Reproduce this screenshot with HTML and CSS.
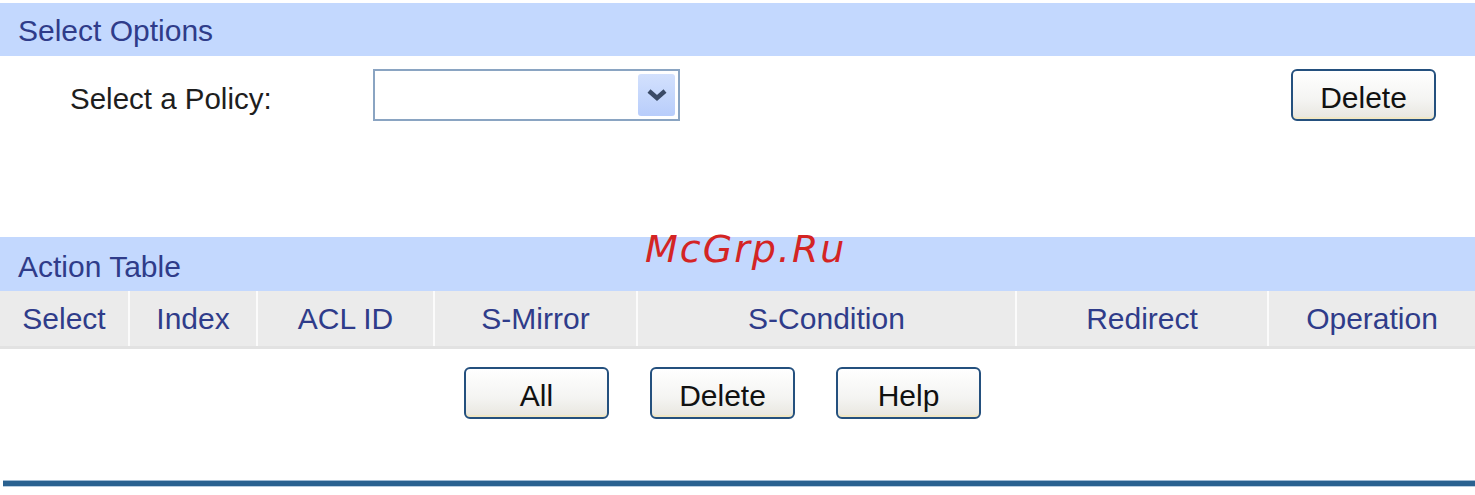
FILE: index.html
```html
<!DOCTYPE html>
<html lang="en">
<head>
  <meta charset="UTF-8" />
  <title>Action Table</title>
  <link rel="stylesheet" href="styles.css">
</head>
<body>
  <div class="page">
    <!-- Select Options -->
    <div class="band">Select Options</div>
    <div class="options">
      <div class="policy">
        <span class="policy-label">Select a Policy:</span>
        <div class="select-box">
          <div class="select-arrow">
            <svg width="22" height="14" viewBox="0 0 22 14"><path d="M3 3 L11 10 L19 3" fill="none" stroke="#3a4a66" stroke-width="4.5" stroke-linejoin="miter"/></svg>
          </div>
        </div>
      </div>
      <button class="btn">Delete</button>
    </div>

    <!-- Action Table -->
    <div class="band band-table">Action Table</div>
    <div class="table-head">
      <div class="col c1">Select</div>
      <div class="col c2">Index</div>
      <div class="col c3">ACL ID</div>
      <div class="col c4">S-Mirror</div>
      <div class="col c5">S-Condition</div>
      <div class="col c6">Redirect</div>
      <div class="col c7">Operation</div>
    </div>
    <div class="actions">
      <button class="btn">All</button>
      <button class="btn">Delete</button>
      <button class="btn">Help</button>
    </div>
    <div class="bottom-line"></div>

    <div class="watermark">McGrp.Ru</div>
  </div>
</body>
</html>
```

FILE: styles.css
```css
/* base */
html, body {
  margin: 0;
  padding: 0;
  background: #fff;
  font-family: "Liberation Sans", Arial, sans-serif;
}
.page {
  position: relative;
  width: 1475px;
  height: 495px;
  padding-top: 3px;
  box-sizing: border-box;
  overflow: hidden;
}

/* blue title bands */
.band {
  height: 53px;
  background: #c3d8fe;
  color: #2f3c8a;
  font-size: 30px;
  line-height: 55px;
  padding-left: 18px;
}
.band-table {
  height: 54px;
  line-height: 60px;
}

/* options row */
.options {
  height: 181px;
  display: flex;
  align-items: flex-start;
  justify-content: space-between;
  padding: 13px 39px 0 70px;
  box-sizing: border-box;
}
.policy {
  display: flex;
  align-items: center;
}
.policy-label {
  width: 303px;
  font-size: 29.5px;
  color: #1e1e1e;
  padding-top: 7px;
}
.select-box {
  width: 307px;
  height: 52px;
  border: 2px solid #8aa4c2;
  box-sizing: border-box;
  background: #fff;
  display: flex;
  justify-content: flex-end;
  align-items: center;
  padding-right: 3px;
}
.select-arrow {
  width: 37px;
  height: 42px;
  border-radius: 3px;
  background: linear-gradient(to bottom, #d3e1fd, #b8cdfb);
  display: flex;
  align-items: center;
  justify-content: center;
}

/* buttons */
.btn {
  width: 145px;
  height: 52px;
  border: 2px solid #24507e;
  border-radius: 6px;
  background: linear-gradient(to bottom, #ffffff 0%, #f4f4f2 60%, #e8e6df 100%);
  font-family: "Liberation Sans", Arial, sans-serif;
  font-size: 30px;
  color: #111;
  padding: 6px 0 0 0;
  box-shadow: inset 0 -2px 0 #f1e7c4;
}

/* table header */
.table-head {
  display: flex;
  height: 58px;
  background: #ebebeb;
  border-bottom: 3px solid #e2e2e2;
  box-sizing: border-box;
}
.col {
  display: flex;
  align-items: center;
  justify-content: center;
  font-size: 30px;
  color: #2f3c8a;
  border-left: 2px solid #fbfbfb;
  box-sizing: border-box;
}
.col.c1 { width: 128px; border-left: none; }
.c2 { width: 128px; }
.c3 { width: 177px; }
.c4 { width: 203px; }
.c5 { width: 379px; }
.c6 { width: 252px; }
.c7 { width: 208px; }

.actions {
  display: flex;
  justify-content: center;
  gap: 41px;
  padding: 18px 30px 0 0;
}

.bottom-line {
  height: 5px;
  margin: 61px 0 0 3px;
  background: #2a6190;
  border-top: 1px solid #9fbad3;
  border-bottom: 1px solid #b9cde0;
}

/* watermark over the header */
.watermark {
  position: absolute;
  left: 645px;
  top: 227px;
  font-family: "DejaVu Sans", sans-serif;
  font-style: italic;
  font-size: 38px;
  letter-spacing: 2px;
  color: #d42424;
}
```
